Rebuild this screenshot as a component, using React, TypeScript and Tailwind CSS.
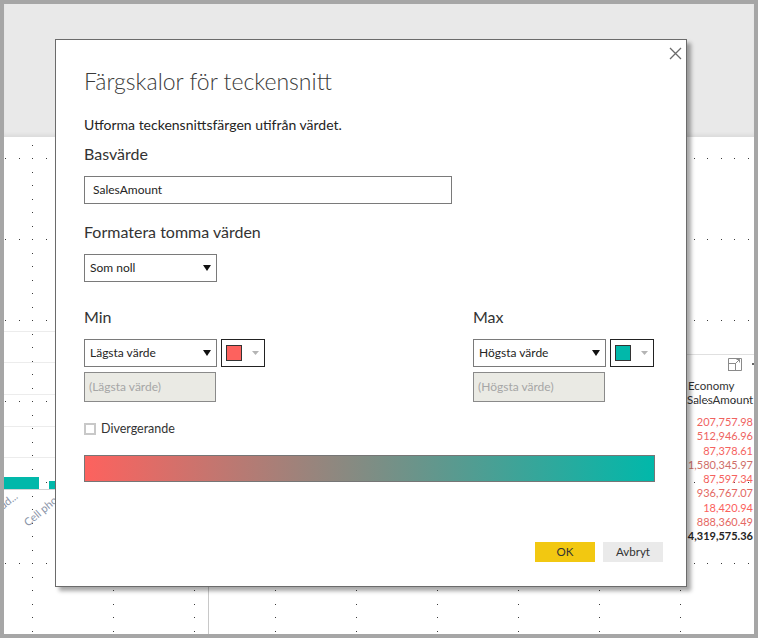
import React from "react";

function Caret() {
  return (
    <svg width="8" height="6" viewBox="0 0 8 6" className="block">
      <polygon points="0,0 8,0 4,6" fill="#111" />
    </svg>
  );
}

function SmallCaret() {
  return (
    <svg width="7" height="4" viewBox="0 0 7 4" className="block">
      <polygon points="0,0 7,0 3.5,4" fill="#b4b4b4" />
    </svg>
  );
}

function Select({ label }: { label: string }) {
  return (
    <div className="flex h-[28px] w-[133px] items-center justify-between border border-[#7a7a7a] bg-white pl-[5px] pr-[5px] text-[12px] text-[#252423]">
      <span>{label}</span>
      <Caret />
    </div>
  );
}

function ColorBox({ color }: { color: string }) {
  return (
    <div className="flex h-[28px] w-[44px] items-center border border-[#222] bg-white pl-[4px]">
      <div className="h-[16px] w-[16px] border border-[#333]" style={{ backgroundColor: color }} />
      <div className="ml-[10px]">
        <SmallCaret />
      </div>
    </div>
  );
}

function RangeColumn({ title, sel, placeholder, color }: { title: string; sel: string; placeholder: string; color: string }) {
  return (
    <div className="flex flex-col">
      <div className="text-[16px] leading-[22px] text-[#333]">{title}</div>
      <div className="mt-[11px] flex gap-[4px]">
        <Select label={sel} />
        <ColorBox color={color} />
      </div>
      <div className="mt-[5px] flex h-[30px] w-[132px] items-center border border-[#8a8a8a] bg-[#eaeae4] pl-[4px] text-[12px] text-[#a6a6a6]">
        {placeholder}
      </div>
    </div>
  );
}

const numbers: { v: string; c: string }[] = [
  { v: "207,757.98", c: "#f0625f" },
  { v: "512,946.96", c: "#ee6461" },
  { v: "87,378.61", c: "#f5625e" },
  { v: "1,580,345.97", c: "#cf6e69" },
  { v: "87,597.34", c: "#f5625e" },
  { v: "936,767.07", c: "#e36863" },
  { v: "18,420.94", c: "#fb615d" },
  { v: "888,360.49", c: "#e56762" },
];

export default function App() {
  return (
    <div className="relative h-[638px] w-[758px] overflow-hidden bg-[#a6a6a6] p-[4px] font-['Lato',sans-serif]">
      <div className="relative flex h-full w-full flex-col overflow-hidden bg-white">
        <div className="h-[133px] shrink-0 bg-[#e9e9e9] shadow-[inset_0_-4px_4px_-2px_rgba(0,0,0,0.07)]" />
        <div className="relative flex-1">
          <svg className="absolute inset-0" width="750" height="497">
            <defs>
              <pattern id="grid" x="28" y="21" width="81" height="81" patternUnits="userSpaceOnUse">
                {[0, 14, 27, 41, 54, 68].map((p) => (
                  <rect key={"h" + p} x={p} y={0} width={1} height={1} fill="#3a3a3a" />
                ))}
                {[14, 27, 41, 54, 68].map((p) => (
                  <rect key={"v" + p} x={0} y={p} width={1} height={1} fill="#3a3a3a" />
                ))}
              </pattern>
            </defs>
            <rect x="0" y="0" width="750" height="497" fill="url(#grid)" />
          </svg>

          {/* left visual */}
          <div className="absolute left-0 top-[194px] h-px w-[60px] bg-[#ececec]" />
          <div className="absolute left-0 top-[225px] h-px w-[60px] bg-[#ececec]" />
          <div className="absolute left-0 top-[257px] h-px w-[60px] bg-[#ececec]" />
          <div className="absolute left-0 top-[289px] h-px w-[60px] bg-[#ececec]" />
          <div className="absolute left-0 top-[320px] h-px w-[60px] bg-[#ececec]" />
          <div className="absolute left-0 top-[340px] h-[12px] w-[35px] bg-[#01b8aa]" />
          <div className="absolute left-[45px] top-[344px] h-[8px] w-[20px] bg-[#01b8aa]" />
          <div className="absolute left-0 top-[352px] h-px w-[60px] bg-[#d4d4d4]" />
          <span className="absolute left-[-4px] top-[364px] origin-left -rotate-[38deg] text-[11px] leading-none text-[#8a94a8]">
            ud...
          </span>
          <span className="absolute left-[21px] top-[381px] origin-left -rotate-[40deg] text-[11px] leading-none text-[#8a94a8]">
            Cell phone
          </span>
          <div className="absolute left-[204px] top-0 h-full w-px bg-[#c8c8c8]" />

          {/* right table visual */}
          <div className="absolute left-[682px] top-[217px] h-px w-[68px] bg-[#e0e0e0]" />
          <svg className="absolute left-[724px] top-[221px]" width="14" height="13" viewBox="0 0 14 13">
            <rect x="0.5" y="5.5" width="7" height="7" fill="none" stroke="#8a8a8a" />
            <path d="M0.5 5.5 V0.5 H13.5 V12.5 H7.5" fill="none" stroke="#8a8a8a" />
            <path d="M7 6 L11.5 1.5 M8.5 1.5 H11.5 V4.5" fill="none" stroke="#8a8a8a" />
          </svg>
          <div className="absolute left-[748px] top-[226px] h-[2px] w-[2px] bg-[#666]" />
          <div className="absolute left-[682px] top-[242px] w-[68px] text-[11.5px] leading-[14px] text-[#333]">
            <div className="pl-[2px]">Economy</div>
            <div className="pl-[1px]">SalesAmount</div>
          </div>
          <div className="absolute right-[1px] top-[278px] flex flex-col items-end text-[11px] leading-[14.3px]">
            {numbers.map((n) => (
              <div key={n.v} style={{ color: n.c }}>
                {n.v}
              </div>
            ))}
            <div className="font-bold text-[#252423]">4,319,575.36</div>
          </div>
        </div>
      </div>

      {/* dialog */}
      <div className="absolute left-[55px] top-[39px] flex h-[548px] w-[632px] flex-col border border-[#6b6b6b] bg-white pl-[28px] pr-[23px] pt-[26px] shadow-[4px_4px_4px_rgba(0,0,0,0.35)]">
        <svg className="absolute left-[613px] top-[7px]" width="13" height="13" viewBox="0 0 13 13">
          <path d="M1 1 L12 12 M12 1 L1 12" stroke="#6a6a6a" strokeWidth="1.3" />
        </svg>
        <div className="text-[23px] font-light leading-[31px] text-[#3a3a3a]">Färgskalor för teckensnitt</div>
        <div className="mt-[18px] text-[14px] leading-[20px] text-[#252423]">Utforma teckensnittsfärgen utifrån värdet.</div>
        <div className="mt-[8px] text-[16px] leading-[22px] text-[#333]">Basvärde</div>
        <div className="mt-[11px] flex h-[28px] w-[368px] items-center border border-[#7a7a7a] pl-[8px] text-[12px] text-[#252423]">
          SalesAmount
        </div>
        <div className="mt-[17px] text-[16px] leading-[22px] text-[#333]">Formatera tomma värden</div>
        <div className="mt-[11px]">
          <Select label="Som noll" />
        </div>
        <div className="mt-[24px] grid grid-cols-[389px_auto]">
          <RangeColumn title="Min" sel="Lägsta värde" placeholder="(Lägsta värde)" color="#fd625e" />
          <RangeColumn title="Max" sel="Högsta värde" placeholder="(Högsta värde)" color="#01b8aa" />
        </div>
        <div className="mt-[21px] flex h-[12px] items-center gap-[5px]">
          <div className="h-[12px] w-[12px] border-2 border-[#c8c8c8] bg-white" />
          <span className="text-[12.5px] leading-[12px] text-[#333]">Divergerande</span>
        </div>
        <div className="mt-[20px] h-[27px] w-[571px] border border-[#767676] bg-[linear-gradient(to_right,#fd625e,#01b8aa)]" />
        <div className="mt-[60px] flex justify-end gap-[8px]">
          <div className="flex h-[20px] w-[60px] items-center justify-center bg-[#f2c811] text-[11.5px] text-[#333]">OK</div>
          <div className="flex h-[20px] w-[60px] items-center justify-center bg-[#eaeaea] text-[11.5px] text-[#333]">Avbryt</div>
        </div>
      </div>
    </div>
  );
}
